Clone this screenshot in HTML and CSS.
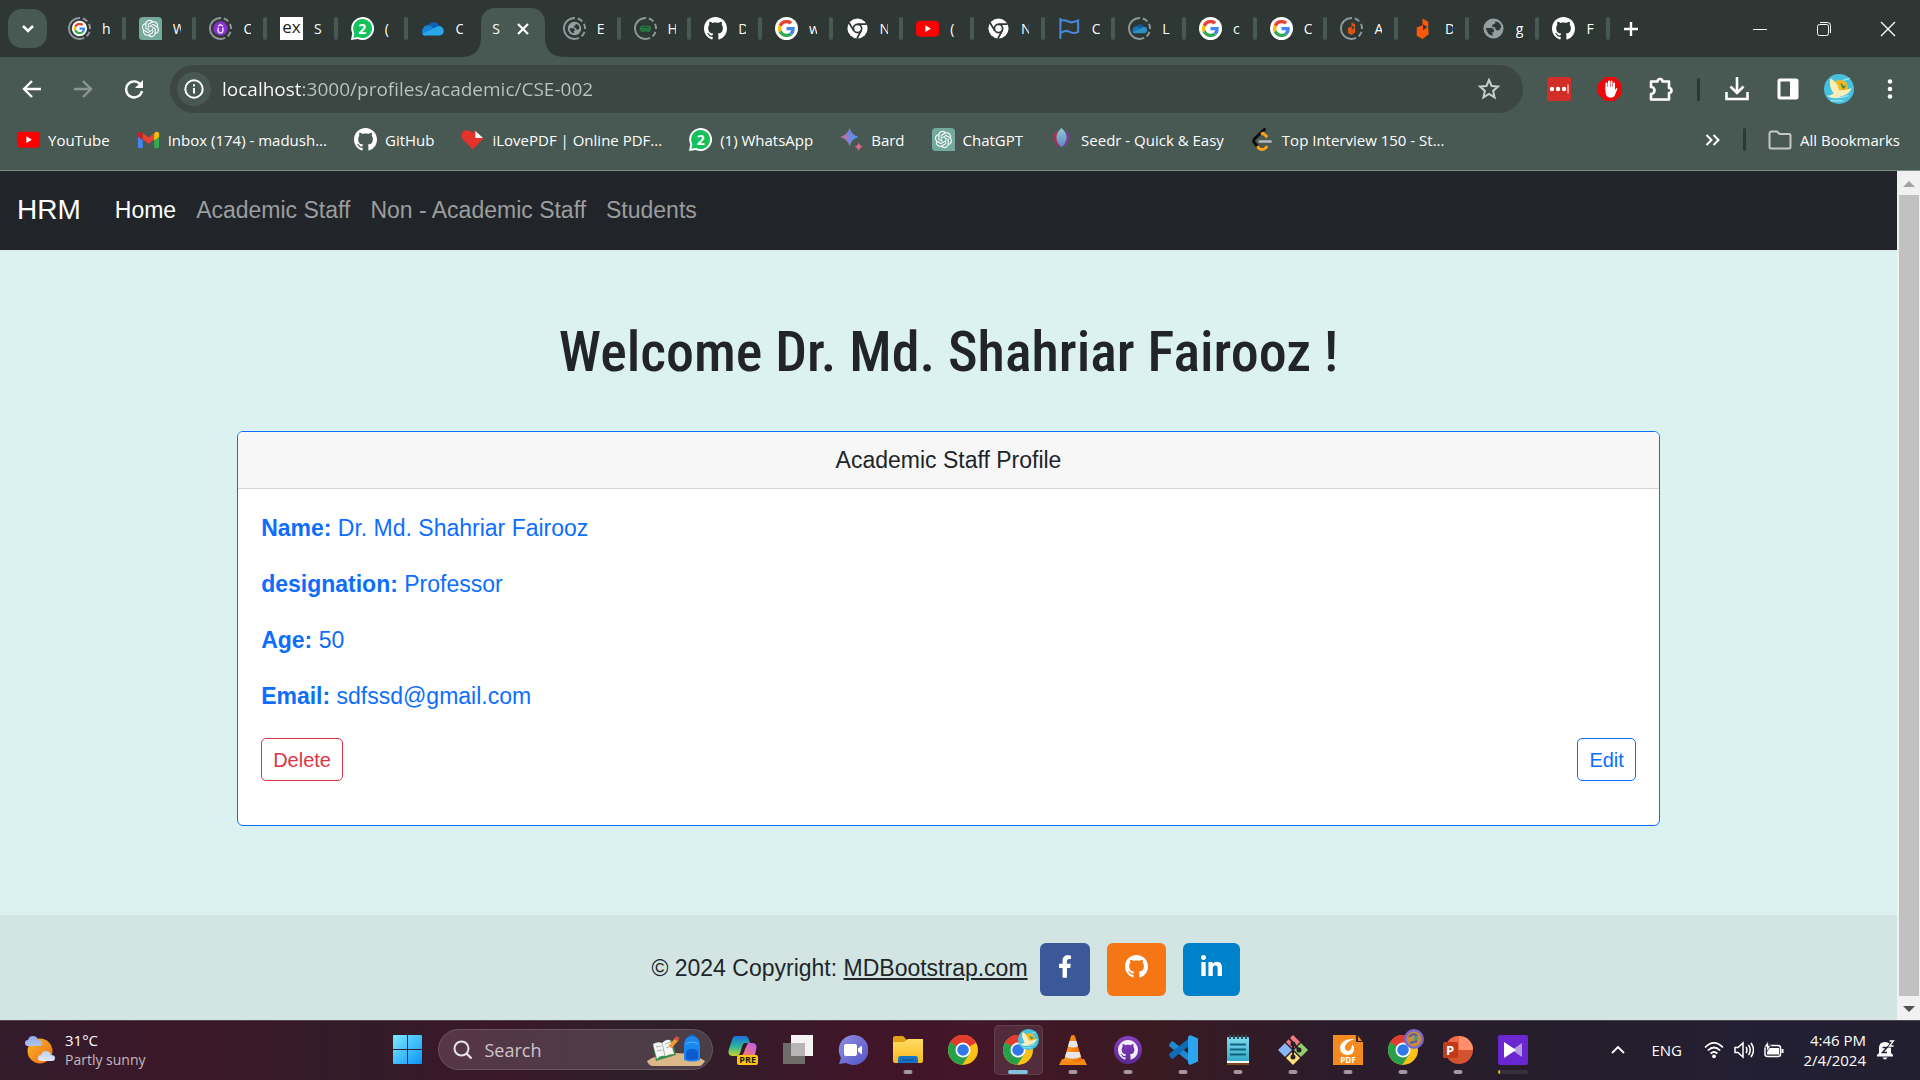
FILE: index.html
```html
<!DOCTYPE html>
<html lang="en">
<head>
<meta charset="utf-8">
<meta name="viewport" content="width=device-width, initial-scale=1">
<title>Staff Profile</title>
<link rel="stylesheet" href="styles.css">
</head>
<body>
<svg class="defs" aria-hidden="true">
  <defs>
    <linearGradient id="win-g" x1="0" y1="0" x2="1" y2="1"><stop offset="0" stop-color="#7deaff"/><stop offset="1" stop-color="#0a94f8"/></linearGradient>
    <linearGradient id="sun-g" x1="0" y1="0" x2="1" y2="1"><stop offset="0" stop-color="#f9b82a"/><stop offset="1" stop-color="#ee6a12"/></linearGradient>
    <linearGradient id="cloud-g" x1="0" y1="0" x2="0" y2="1"><stop offset="0" stop-color="#8fabe8"/><stop offset="1" stop-color="#dfe9fb"/></linearGradient>
    <linearGradient id="bard-g" x1="0" y1="0" x2="1" y2="0"><stop offset="0" stop-color="#e0667c"/><stop offset=".5" stop-color="#7b82e0"/><stop offset="1" stop-color="#3fa0e8"/></linearGradient>
    <linearGradient id="seedr-g" x1="0" y1="0" x2="0" y2="1"><stop offset="0" stop-color="#8fd0cf"/><stop offset="1" stop-color="#5b86c4"/></linearGradient>
    <linearGradient id="folder-g" x1="0" y1="0" x2="0" y2="1"><stop offset="0" stop-color="#ffdc63"/><stop offset="1" stop-color="#f7b81c"/></linearGradient>
    <linearGradient id="meet-g" x1="0" y1="0" x2="1" y2="1"><stop offset="0" stop-color="#8f8fe0"/><stop offset="1" stop-color="#5353c8"/></linearGradient>
    <linearGradient id="cop-a" x1="0" y1="0" x2="0" y2="1"><stop offset="0" stop-color="#1f6fe0"/><stop offset=".5" stop-color="#27b2a0"/><stop offset="1" stop-color="#c7d42b"/></linearGradient>
    <linearGradient id="cop-b" x1="1" y1="0" x2="0" y2="1"><stop offset="0" stop-color="#b45cf0"/><stop offset="1" stop-color="#ff7a6b"/></linearGradient>
    <linearGradient id="purple-g" x1="0" y1="0" x2="0" y2="1"><stop offset="0" stop-color="#8a3fc0"/><stop offset="1" stop-color="#5b2a92"/></linearGradient>
    <linearGradient id="note-g" x1="0" y1="0" x2="0" y2="1"><stop offset="0" stop-color="#7fdcec"/><stop offset="1" stop-color="#35a9c9"/></linearGradient>
    <linearGradient id="cone-g" x1="0" y1="0" x2="1" y2="0"><stop offset="0" stop-color="#ffa031"/><stop offset="1" stop-color="#e86b00"/></linearGradient>
  </defs>
  <symbol id="github" viewBox="0 0 16 16"><path fill="currentColor" d="M8 0C3.58 0 0 3.58 0 8c0 3.54 2.29 6.53 5.47 7.59.4.07.55-.17.55-.38 0-.19-.01-.82-.01-1.49-2.01.37-2.53-.49-2.69-.94-.09-.23-.48-.94-.82-1.13-.28-.15-.68-.52-.01-.53.63-.01 1.08.58 1.23.82.72 1.21 1.87.87 2.33.66.07-.52.28-.87.51-1.07-1.78-.2-3.64-.89-3.64-3.95 0-.87.31-1.59.82-2.15-.08-.2-.36-1.02.08-2.12 0 0 .67-.21 2.2.82.64-.18 1.32-.27 2-.27.68 0 1.36.09 2 .27 1.53-1.04 2.2-.82 2.2-.82.44 1.1.16 1.92.08 2.12.51.56.82 1.27.82 2.15 0 3.07-1.87 3.75-3.65 3.95.29.25.54.73.54 1.48 0 1.07-.01 1.93-.01 2.2 0 .21.15.46.55.38A8.012 8.012 0 0 0 16 8c0-4.42-3.58-8-8-8z"/></symbol>
  <symbol id="g-mark" viewBox="0 0 48 48"><path fill="#ea4335" d="M24 9.5c3.54 0 6.71 1.22 9.21 3.6l6.85-6.85C35.9 2.38 30.47 0 24 0 14.62 0 6.51 5.38 2.56 13.22l7.98 6.19C12.43 13.72 17.74 9.5 24 9.5z"/><path fill="#4285f4" d="M46.98 24.55c0-1.57-.15-3.09-.38-4.55H24v9.02h12.94c-.58 2.96-2.26 5.48-4.78 7.18l7.73 6c4.51-4.18 7.09-10.36 7.09-17.65z"/><path fill="#fbbc05" d="M10.53 28.59c-.48-1.45-.76-2.99-.76-4.59s.27-3.14.76-4.59l-7.98-6.19C.92 16.46 0 20.12 0 24c0 3.88.92 7.54 2.56 10.78l7.97-6.19z"/><path fill="#34a853" d="M24 48c6.48 0 11.93-2.13 15.89-5.81l-7.73-6c-2.15 1.45-4.92 2.3-8.16 2.3-6.26 0-11.57-4.22-13.47-9.91l-7.98 6.19C6.51 42.62 14.62 48 24 48z"/></symbol>
  <symbol id="google" viewBox="0 0 24 24"><circle cx="12" cy="12" r="12" fill="#fff"/><use href="#g-mark" x="3" y="3" width="18" height="18"/></symbol>
  <symbol id="ring" viewBox="0 0 24 24"><circle cx="12" cy="12" r="11" fill="none" stroke="#8f989a" stroke-width="2" stroke-dasharray="34.5 3 5.6 3 5.6 3 5.6 3 6 0"  transform="rotate(92 12 12)"/></symbol>
  <symbol id="google-idle" viewBox="0 0 24 24"><use href="#ring"/><circle cx="12" cy="12" r="8" fill="#fff"/><use href="#g-mark" x="6" y="6" width="12" height="12"/></symbol>
  <symbol id="gpt" viewBox="0 0 24 24"><path fill="#74aa9c" d="M4 0h16a4 4 0 0 1 4 4v20H4a4 4 0 0 1-4-4V4a4 4 0 0 1 4-4z"/><g transform="translate(3 3) scale(.75)"><path fill="#fff" d="M22.2819 9.8211a5.9847 5.9847 0 0 0-.5157-4.9108 6.0462 6.0462 0 0 0-6.5098-2.9A6.0651 6.0651 0 0 0 4.9807 4.1818a5.9847 5.9847 0 0 0-3.9977 2.9 6.0462 6.0462 0 0 0 .7427 7.0966 5.98 5.98 0 0 0 .511 4.9107 6.051 6.051 0 0 0 6.5146 2.9001A5.9847 5.9847 0 0 0 13.2599 24a6.0557 6.0557 0 0 0 5.7718-4.2058 5.9894 5.9894 0 0 0 3.9977-2.9001 6.0557 6.0557 0 0 0-.7475-7.0729zm-9.022 12.6081a4.4755 4.4755 0 0 1-2.8764-1.0408l.1419-.0804 4.7783-2.7582a.7948.7948 0 0 0 .3927-.6813v-6.7369l2.02 1.1686a.071.071 0 0 1 .038.052v5.5826a4.504 4.504 0 0 1-4.4945 4.4944zm-9.6607-4.1254a4.4708 4.4708 0 0 1-.5346-3.0137l.142.0852 4.783 2.7582a.7712.7712 0 0 0 .7806 0l5.8428-3.3685v2.3324a.0804.0804 0 0 1-.0332.0615L9.74 19.9502a4.4992 4.4992 0 0 1-6.1408-1.6464zM2.3408 7.8956a4.485 4.485 0 0 1 2.3655-1.9728V11.6a.7664.7664 0 0 0 .3879.6765l5.8144 3.3543-2.0201 1.1685a.0757.0757 0 0 1-.071 0l-4.8303-2.7865A4.504 4.504 0 0 1 2.3408 7.872zm16.5963 3.8558L13.1038 8.364 15.1192 7.2a.0757.0757 0 0 1 .071 0l4.8303 2.7913a4.4944 4.4944 0 0 1-.6765 8.1042v-5.6772a.79.79 0 0 0-.407-.667zm2.0107-3.0231l-.142-.0852-4.7735-2.7818a.7759.7759 0 0 0-.7854 0L9.409 9.2297V6.8974a.0662.0662 0 0 1 .0284-.0615l4.8303-2.7866a4.4992 4.4992 0 0 1 6.6802 4.66zM8.3065 12.863l-2.02-1.1638a.0804.0804 0 0 1-.038-.0567V6.0742a4.4992 4.4992 0 0 1 7.3757-3.4537l-.142.0805L8.704 5.459a.7948.7948 0 0 0-.3927.6813zm1.0976-2.3654l2.602-1.4998 2.6069 1.4998v2.9994l-2.5974 1.4997-2.6067-1.4997Z"/></g></symbol>
  <symbol id="udemy" viewBox="0 0 24 24"><use href="#ring"/><circle cx="12" cy="12" r="7.5" fill="#8a2fd0"/><path d="M9.5 11v3a2.5 2.5 0 0 0 5 0v-3M9.5 9.500 12 8l2.500 1.500" fill="none" stroke="#e9d9ff" stroke-width="1.600"/></symbol>
  <symbol id="whatsapp" viewBox="0 0 24 24"><path fill="#fff" d="M12 0a12 12 0 1 1-5 22.900L0 24l1.300-7A12 12 0 0 1 12 0z"/><path fill="#13c25a" d="M12 2a10 10 0 1 1-4.600 18.900L2.500 21.700l1-4.800A10 10 0 0 1 12 2z"/></symbol>
  <symbol id="cloud" viewBox="0 0 24 24"><path fill="#0a62b8" d="M7 10a6.500 6.500 0 0 1 12-1l-9 6z"/><path fill="#1484d7" d="M2 12a5.500 5.500 0 0 1 8-2.500l8 5.500-14 4.500A5 5 0 0 1 2 12z"/><path fill="#28a8ea" d="M18 9.500a5 5 0 0 1 1.500 9.900H5a5 5 0 0 1-4-2l9.500-4z"/></symbol>
  <symbol id="cloud-idle" viewBox="0 0 24 24"><use href="#ring"/><use href="#cloud" x="4" y="4" width="16" height="16" opacity=".8"/></symbol>
  <symbol id="globe" viewBox="0 0 24 24"><circle cx="12" cy="12" r="10.500" fill="#969ea0"/><path fill="#2e3734" d="M4 11.500h6q2.500.5 2.500 2.500v2h-2l1 3.500q-6-.5-7.500-8zM20 10q-1 4.500-4 4-2.500-.5-2-3l-3-.5Q10 8 12 7.500q2 0 2-3 5 1 6 5.500z"/></symbol>
  <symbol id="globe-idle" viewBox="0 0 24 24"><use href="#ring"/><use href="#globe" x="4" y="4" width="16" height="16"/></symbol>
  <symbol id="gfg-idle" viewBox="0 0 24 24"><use href="#ring"/><path fill="none" stroke="#247a3f" stroke-width="1.800" d="M11.500 10.500a2.600 2.600 0 1 0 0 3.500v-1.500H6M12.500 10.500a2.600 2.600 0 1 1 0 3.500v-1.500H18"/></symbol>
  <symbol id="chrome-white" viewBox="0 0 24 24"><circle cx="12" cy="12" r="10.500" fill="#fff"/><circle cx="12" cy="12" r="4.300" fill="#fff" stroke="#2e3734" stroke-width="1.800"/><path d="M12 7.500h9.500M8.100 14.200 3.300 6.300M15.900 14.200l-4.500 8.200" stroke="#2e3734" stroke-width="1.800"/></symbol>
  <symbol id="youtube" viewBox="0 0 24 24"><rect x="0" y="4" width="24" height="16.500" rx="4" fill="#f00"/><path fill="#fff" d="M9.800 8.700v7l5.800-3.500z"/></symbol>
  <symbol id="flag" viewBox="0 0 24 24"><path fill="none" stroke="#4a86d8" stroke-width="2.200" d="M2.500 1v22M3 4c5-2.500 8 2.500 12 1.500 2.500-.5 4-1 6-2v12c-6 3.500-9-1-12-1-2.500 0-4 1-6 2"/></symbol>
  <symbol id="flame" viewBox="0 0 24 24"><path fill="#fb5a0c" d="M12 1.500l6 3.500v6.500l.500 6.500-6.500 5-6-3.500V11l6-2.500z"/><path fill="#2e3734" d="M12.500 7.500l4.500 3-4.500 3.500z"/></symbol>
  <symbol id="flame-idle" viewBox="0 0 24 24"><use href="#ring"/><use href="#flame" x="4.500" y="4.500" width="15" height="15" opacity=".85"/></symbol>
  <symbol id="gmail" viewBox="0 0 24 24"><path fill="#4285f4" d="M1 7v12.500A1.500 1.500 0 0 0 2.500 21H6V10z"/><path fill="#34a853" d="M23 7v12.500a1.500 1.500 0 0 1-1.500 1.500H18V10z"/><path fill="#ea4335" d="M6 5.500v6.500l6 4.500 6-4.500V5.500L12 10z"/><path fill="#c5221f" d="M1 6v3l5 4V5.500C3.500 3 1 4 1 6z"/><path fill="#fbbc04" d="M23 6v3l-5 4V5.500C20.500 3 23 4 23 6z"/></symbol>
  <symbol id="lovepdf" viewBox="0 0 24 24"><path fill="#e5322d" d="M12 22.500 2 12C-2 7 2 1.500 7 2.500c2 .300 3.500 1.300 5 2.500l3-2.500 8 8.500-1 1.500z"/><path fill="#fff" d="M15 3v7.500h8z"/></symbol>
  <symbol id="bard" viewBox="0 0 24 24"><path fill="url(#bard-g)" d="M10 0c1.500 5 4.500 8 9.500 9.500C14.500 11 11.500 14 10 19 8.500 14 5 11 0 9.500 5 8 8.500 5 10 0z"/><path fill="#dd6b86" d="M19.500 15c.700 2.600 1.900 3.800 4.500 4.500-2.600.700-3.800 1.900-4.500 4.500-.700-2.600-1.900-3.800-4.500-4.500 2.600-.700 3.800-1.900 4.500-4.500z"/></symbol>
  <symbol id="seedr" viewBox="0 0 24 24"><path fill="#a8305c" d="M8 2C2 5 2 16 10 20z"/><path fill="#7a3f9c" d="M16 2c6 3 6 14-3 18z"/><path fill="url(#seedr-g)" d="M12 0c7 6 7 14 0 20-7-6-7-14 0-20z"/></symbol>
  <symbol id="leet" viewBox="0 0 24 24"><path d="M14 1.500 4 11q-2.500 2.500 0 5l2.500 3" fill="none" stroke="#0b0b0b" stroke-width="3" stroke-linecap="round"/><path d="M10.500 6.500l2-1L17 9.500M6.500 19l2 2.500q3 2 6 0l2.500-2.500" fill="none" stroke="#ffa116" stroke-width="3"/><path d="M9 14h11.500" stroke="#b8b8b8" stroke-width="2.600" stroke-linecap="round"/></symbol>
  <symbol id="chrome" viewBox="0 0 30 30"><circle cx="15" cy="15" r="15" fill="#fbc116"/><path fill="#e33b2e" d="M15 15 2 7.500a15 15 0 0 1 26 0z"/><path fill="#e33b2e" d="M15 7.500h13L15 15z"/><path fill="#27a04c" d="M2 7.500a15 15 0 0 0 12.200 22.400L21.500 18.800 15 15z"/><path fill="#27a04c" d="M2 7.500 9 19l6-4z"/><circle cx="15" cy="15" r="7.500" fill="#fff"/><circle cx="15" cy="15" r="5.800" fill="#3078ea"/></symbol>
  <symbol id="avatar" viewBox="0 0 28 28"><circle cx="14" cy="14" r="14" fill="#45c1dd"/><path d="M3 20q8 4 20 0M18 6l6-2M6 25h12" stroke="#8fe0ef" stroke-width="1.500" fill="none"/><circle cx="15" cy="13" r="7.500" fill="#f5b822"/><path fill="#fbeeb8" d="M6 4q6 3 8 11 6 1 12-2-3 6-8 7-7 4-14 1l5-3Q4 11 6 4z"/><path d="M16 9l2 4 2-2" stroke="#358a49" stroke-width="1.500" fill="none"/></symbol>
</svg>

<header class="browser">
  <div class="tabstrip">
    <button class="tab-search" aria-label="Search tabs"><svg width="14" height="14" viewBox="0 0 14 14"><path d="M2 4l5 5 5-5" fill="none" stroke="#fff" stroke-width="2.500"/></svg></button>
    <div class="tabs">
      <div class="tab"><svg class="fav"><use href="#google-idle"/></svg><span>h</span></div>
      <div class="tab"><svg class="fav"><use href="#gpt"/></svg><span>W</span></div>
      <div class="tab"><svg class="fav"><use href="#udemy"/></svg><span>C</span></div>
      <div class="tab"><b class="fav fav-ex">ex</b><span>S</span></div>
      <div class="tab"><b class="fav fav-wa"><svg class="fav"><use href="#whatsapp"/></svg><i>2</i></b><span>(</span></div>
      <div class="tab tab-last"><svg class="fav"><use href="#cloud"/></svg><span>C</span></div>
      <div class="tab tab-active"><span>S</span><button aria-label="Close tab"><svg width="14" height="14" viewBox="0 0 14 14"><path d="M2 2l10 10M12 2 2 12" stroke="#fff" stroke-width="2.200"/></svg></button></div>
      <div class="tab"><svg class="fav"><use href="#globe-idle"/></svg><span>E</span></div>
      <div class="tab"><svg class="fav"><use href="#gfg-idle"/></svg><span>H</span></div>
      <div class="tab"><svg class="fav"><use href="#github"/></svg><span>D</span></div>
      <div class="tab"><svg class="fav"><use href="#google"/></svg><span>w</span></div>
      <div class="tab"><svg class="fav"><use href="#chrome-white"/></svg><span>N</span></div>
      <div class="tab"><svg class="fav"><use href="#youtube"/></svg><span>(</span></div>
      <div class="tab"><svg class="fav"><use href="#chrome-white"/></svg><span>N</span></div>
      <div class="tab"><svg class="fav"><use href="#flag"/></svg><span>C</span></div>
      <div class="tab"><svg class="fav"><use href="#cloud-idle"/></svg><span>L</span></div>
      <div class="tab"><svg class="fav"><use href="#google"/></svg><span>c</span></div>
      <div class="tab"><svg class="fav"><use href="#google"/></svg><span>C</span></div>
      <div class="tab"><svg class="fav"><use href="#flame-idle"/></svg><span>A</span></div>
      <div class="tab"><svg class="fav"><use href="#flame"/></svg><span>D</span></div>
      <div class="tab"><svg class="fav"><use href="#globe"/></svg><span>g</span></div>
      <div class="tab"><svg class="fav"><use href="#github"/></svg><span>F</span></div>
    </div>
    <button class="new-tab" aria-label="New tab"><svg width="16" height="16" viewBox="0 0 16 16"><path d="M8 1v14M1 8h14" stroke="#fff" stroke-width="2.400"/></svg></button>
    <div class="window-controls">
      <button aria-label="Minimize"><svg width="14" height="14" viewBox="0 0 14 14"><path d="M0 7.500h14" stroke="#fff"/></svg></button>
      <button aria-label="Restore"><svg width="16" height="16" viewBox="0 0 16 16" fill="none" stroke="#fff"><rect x="1.500" y="3.500" width="11" height="11" rx="2"/><path d="M4 1.500h7.500a3 3 0 0 1 3 3V12"/></svg></button>
      <button aria-label="Close"><svg width="16" height="16" viewBox="0 0 16 16"><path d="M1 1l14 14M15 1 1 15" stroke="#fff" stroke-width="1.300"/></svg></button>
    </div>
  </div>

  <div class="toolbar">
    <div class="nav-buttons">
      <button aria-label="Back"><svg width="20" height="20" viewBox="0 0 20 20"><path d="M19 10H3M10 2l-8 8 8 8" fill="none" stroke="#fff" stroke-width="2.400"/></svg></button>
      <button aria-label="Forward"><svg width="20" height="20" viewBox="0 0 20 20"><path d="M1 10h16M10 2l8 8-8 8" fill="none" stroke="#8b9691" stroke-width="2.400"/></svg></button>
      <button aria-label="Reload"><svg width="20" height="20" viewBox="0 0 20 20"><path d="M16.500 5.500A8 8 0 1 0 18 12" fill="none" stroke="#fff" stroke-width="2.400"/><path fill="#fff" d="M19 1v8h-8z"/></svg></button>
    </div>
    <div class="omnibox">
      <button class="site-info" aria-label="Site information"><svg width="20" height="20" viewBox="0 0 20 20"><circle cx="10" cy="10" r="8.700" fill="none" stroke="#fff" stroke-width="2"/><path d="M10 9v5.500M10 5.300v2.200" stroke="#fff" stroke-width="2"/></svg></button>
      <input class="address" type="text" aria-label="Address" value="localhost:3000/profiles/academic/CSE-002">
      <button class="star" aria-label="Bookmark this page"><svg width="24" height="24" viewBox="0 0 24 24"><path d="M12 3l2.600 6 6.400.600-4.900 4.300 1.500 6.400L12 16.900l-5.600 3.400 1.500-6.400L3 9.600l6.400-.600z" fill="none" stroke="#c9cecb" stroke-width="2"/></svg></button>
    </div>
    <div class="extensions">
      <button aria-label="Password manager"><svg width="24" height="24" viewBox="0 0 24 24"><rect width="24" height="24" rx="2" fill="#d32d27"/><g fill="#fff"><circle cx="5" cy="12" r="2.200"/><circle cx="11" cy="12" r="2.200"/><circle cx="17" cy="12" r="2.200"/><path d="M20.500 7.500h1v9h-1z"/></g></svg></button>
      <button aria-label="Ad blocker"><svg width="24" height="24" viewBox="0 0 24 24"><path fill="#ea0a0a" d="M7 0h10l7 7v10l-7 7H7l-7-7V7z"/><path d="M8.500 13V6.500M11 12V4.500M13.500 12V4.500M16 13V6.500" stroke="#fff" stroke-width="2" stroke-linecap="round"/><path fill="#fff" d="M7.500 10H17v3l1.500-2q1.500 0 .5 2l-2.500 6q-1 1.500-3 1.500h-2q-4-1-4-6z"/></svg></button>
      <button aria-label="Extensions"><svg width="26" height="26" viewBox="0 0 26 26"><path d="M3 5.500h6.500a2.500 2.500 0 0 1 5 0H21v6.500a2.500 2.500 0 0 1 0 5V23.500H3V18a3.500 3.500 0 0 0 0-7z" fill="none" stroke="#fff" stroke-width="2.600" stroke-linejoin="round"/></svg></button>
      <span class="divider"></span>
      <button aria-label="Downloads"><svg width="24" height="24" viewBox="0 0 24 24"><path d="M12 0v15M5.500 9.500 12 16l6.500-6.500M1.500 15v7h21v-7" fill="none" stroke="#fff" stroke-width="2.600"/></svg></button>
      <button aria-label="Side panel"><svg width="22" height="22" viewBox="0 0 22 22"><rect x="2" y="2" width="18" height="18" rx="1" fill="none" stroke="#fff" stroke-width="3"/><path fill="#fff" d="M13 1h8v20h-8z"/></svg></button>
      <button aria-label="Profile"><svg width="30" height="30"><use href="#avatar"/></svg></button>
      <button aria-label="Menu"><svg width="6" height="20" viewBox="0 0 6 20" fill="#fff"><circle cx="3" cy="2.500" r="2.300"/><circle cx="3" cy="10" r="2.300"/><circle cx="3" cy="17.500" r="2.300"/></svg></button>
    </div>
  </div>

  <nav class="bookmarks" aria-label="Bookmarks">
    <a href="#"><svg class="fav"><use href="#youtube"/></svg>YouTube</a>
    <a href="#"><svg class="fav"><use href="#gmail"/></svg>Inbox (174) - madush...</a>
    <a href="#"><svg class="fav"><use href="#github"/></svg>GitHub</a>
    <a href="#"><svg class="fav"><use href="#lovepdf"/></svg>iLovePDF | Online PDF...</a>
    <a href="#"><b class="fav fav-wa"><svg class="fav"><use href="#whatsapp"/></svg><i>2</i></b>(1) WhatsApp</a>
    <a href="#"><svg class="fav"><use href="#bard"/></svg>Bard</a>
    <a href="#"><svg class="fav"><use href="#gpt"/></svg>ChatGPT</a>
    <a href="#"><svg class="fav"><use href="#seedr"/></svg>Seedr - Quick &amp; Easy</a>
    <a href="#"><svg class="fav"><use href="#leet"/></svg>Top Interview 150 - St...</a>
    <button class="more" aria-label="More bookmarks"><svg width="16" height="14" viewBox="0 0 16 14"><path d="M1.500 2l5 5-5 5M8.500 2l5 5-5 5" fill="none" stroke="#fff" stroke-width="2"/></svg></button>
    <span class="divider"></span>
    <a href="#"><svg width="24" height="20" viewBox="0 0 24 20"><path d="M1.500 3.500a2 2 0 0 1 2-2H9L11.500 4H21a1.500 1.500 0 0 1 1.500 1.500V17a1.500 1.500 0 0 1-1.500 1.500H3A1.500 1.500 0 0 1 1.500 17z" fill="none" stroke="#c4c8c5" stroke-width="2"/></svg>All Bookmarks</a>
  </nav>
</header>

<div class="viewport">
  <div class="site">
    <nav class="navbar" aria-label="Main">
      <a class="brand" href="#">HRM</a>
      <a class="current" href="#">Home</a>
      <a href="#">Academic Staff</a>
      <a href="#">Non - Academic Staff</a>
      <a href="#">Students</a>
    </nav>
    <main class="content">
      <h1>Welcome Dr. Md. Shahriar Fairooz !</h1>
      <section class="card">
        <h2>Academic Staff Profile</h2>
        <div class="card-body">
          <p><b>Name:</b> Dr. Md. Shahriar Fairooz</p>
          <p><b>designation:</b> Professor</p>
          <p><b>Age:</b> 50</p>
          <p><b>Email:</b> sdfssd@gmail.com</p>
          <div class="actions">
            <button class="btn btn-danger">Delete</button>
            <button class="btn btn-primary">Edit</button>
          </div>
        </div>
      </section>
    </main>
    <footer class="footer">
      <p>© 2024 Copyright: <a href="#">MDBootstrap.com</a></p>
      <a class="social facebook" href="#" aria-label="Facebook"><svg width="14" height="23" viewBox="0 0 320 512"><path fill="#fff" d="M279.140 288l14.220-92.660h-88.910v-60.130c0-25.350 12.420-50.060 52.240-50.060h40.420V6.260S260.430 0 225.360 0c-73.220 0-121.080 44.380-121.080 124.720v70.620H22.890V288h81.390v224h100.170V288z"/></svg></a>
      <a class="social git" href="#" aria-label="GitHub"><svg width="23" height="23"><use href="#github"/></svg></a>
      <a class="social linkedin" href="#" aria-label="LinkedIn"><svg width="21" height="24" viewBox="0 0 448 512"><path fill="#fff" d="M100.280 448H7.400V148.900h92.880zM53.790 108.100C24.090 108.100 0 83.500 0 53.800a53.790 53.790 0 0 1 107.580 0c0 29.700-24.100 54.300-53.790 54.300zM447.900 448h-92.680V302.400c0-34.700-.700-79.200-48.290-79.200-48.290 0-55.690 37.700-55.690 76.700V448h-92.780V148.900h89.080v40.800h1.300c12.400-23.500 42.690-48.300 87.880-48.300 94 0 111.280 61.900 111.280 142.300V448z"/></svg></a>
    </footer>
  </div>
  <div class="scrollbar" aria-hidden="true">
    <svg width="12" height="24" viewBox="0 0 12 24"><path fill="#a3a3a3" d="M0 16l6-6 6 6z"/></svg>
    <span class="thumb"></span>
    <svg width="12" height="24" viewBox="0 0 12 24"><path fill="#505050" d="M0 10l6 6 6-6z"/></svg>
  </div>
</div>

<div class="taskbar">
  <button class="weather">
    <svg width="30" height="30" viewBox="0 0 30 30"><circle cx="15" cy="16" r="12.500" fill="url(#sun-g)"/><path fill="url(#cloud-g)" d="M3 11a3 3 0 0 1 0-6q1-4 5-4t5 4q4 0 4 3t-3 3zM16 26a3 3 0 0 1 0-6q1-4 5-4t5 4q4 0 4 3t-3 3z"/></svg>
    <span>31°C<small>Partly sunny</small></span>
  </button>

  <div class="dock">
    <button class="app" aria-label="Start"><svg width="29" height="29" viewBox="0 0 29 29" fill="url(#win-g)"><path d="M0 1a1 1 0 0 1 1-1h27a1 1 0 0 1 1 1v27a1 1 0 0 1-1 1H1a1 1 0 0 1-1-1z"/><path d="M14 0h1v29h-1zM0 14h29v1H0z" fill="#33203a"/></svg></button>
    <div class="search">
      <svg width="20" height="20" viewBox="0 0 20 20"><circle cx="8.500" cy="8.500" r="7" fill="none" stroke="#e9e2e6" stroke-width="2"/><path d="M13.500 13.500l5 5" stroke="#e9e2e6" stroke-width="2.400"/></svg>
      <input type="search" aria-label="Search" placeholder="Search">
      <svg width="58" height="32" viewBox="0 0 58 32"><path fill="#dcb788" d="M0 27q12-8 29-8t29 8q-3 5-6 5H6q-4 0-6-5z"/><path fill="#3c8f4f" d="M6 12l19-6 4 15-20 6z"/><path fill="#f6f6f2" d="M6 10q5-3 9-1 4-4 8-3l4 14q-5 0-8 2-6-1-9 3z"/><path d="M15 9l3 13M9 13l5-1M10 17l5-1M18 10l5-2M19 14l5-2" stroke="#a9b0b5" fill="none"/><path d="M30 5l-7 8" stroke="#f39a2d" stroke-width="4"/><path d="M31 3l-2 3" stroke="#e54b3c" stroke-width="4"/><path d="M42 4q3-6 6 0" stroke="#1664c8" stroke-width="2" fill="none"/><path fill="#1a86f0" d="M37 26V12q0-10 8-10t8 10v14q-8 3-16 0z"/><path fill="#0c5bd0" d="M39 25v-6q0-4 6-4t6 4v6q-6 2-12 0z"/><path d="M39 10q6-4 12 0" stroke="#5db5ff" fill="none"/></svg>
    </div>
    <button class="app" aria-label="Copilot"><span class="copilot"><svg width="30" height="30" viewBox="0 0 30 30"><path fill="url(#cop-a)" d="M8 1h9q3 0 4 4l1 3h-5q-2 0-3 4l-2 6q-1 3-4 3H4q-5-1-3-7L4 5q1-4 4-4z"/><path fill="url(#cop-b)" d="M20 8h5q5 1 3 7l-1 5H14q2-1 3-6z"/></svg><em>PRE</em></span></button>
    <button class="app" aria-label="Task view"><svg width="30" height="30" viewBox="0 0 30 30"><rect y="8" width="22" height="21" fill="#6f6c6c"/><rect x="8" width="22" height="21" fill="#f6f3f4"/><path fill="#b9b5b6" d="M8 8h14v13H8z"/></svg></button>
    <button class="app" aria-label="Chat"><svg width="30" height="30" viewBox="0 0 30 30"><path fill="url(#meet-g)" d="M15 0a15 15 0 1 1-7 28l-7 1 2-6A15 15 0 0 1 15 0z"/><path fill="#fff" d="M6 11a2 2 0 0 1 2-2h9a2 2 0 0 1 2 2v8a2 2 0 0 1-2 2H8a2 2 0 0 1-2-2zM20 13.500l4-3v9l-4-3z"/></svg></button>
    <button class="app running" aria-label="File Explorer"><svg width="30" height="30" viewBox="0 0 30 30"><path fill="#e0a214" d="M0 3q0-2 2-2h8l4 4v4H0z"/><path fill="url(#folder-g)" d="M0 7h11l4-3h15v22q0 2-2 2H2q-2 0-2-2z"/><path fill="#1673c4" d="M5 28v-4q0-3 3-3h14q3 0 3 3v4z"/><path d="M9 25h12" stroke="#0b4c8c"/></svg></button>
    <button class="app" aria-label="Chrome"><svg width="30" height="30"><use href="#chrome"/></svg></button>
    <button class="app running active" aria-label="Chrome, work profile"><svg width="42" height="42" viewBox="0 0 42 42"><use href="#chrome" x="6" y="6" width="30" height="30"/><use href="#avatar" x="21" y="0" width="21" height="21"/></svg></button>
    <button class="app running" aria-label="VLC"><svg width="28" height="30" viewBox="0 0 28 30"><path fill="#f58a12" d="M3 24h22l3 6H0z"/><path fill="url(#cone-g)" d="M12 1q2-2 4 0l7 24q-9 5-18 0z"/><path fill="#e6e6e8" d="M10.500 6h7l1.500 5.500q-5 2-10 0zM7.500 17h13l1.500 5q-8 3.500-16 0z"/></svg></button>
    <button class="app running" aria-label="GitHub Desktop"><svg width="30" height="30" viewBox="0 0 30 30"><circle cx="15" cy="15" r="14" fill="url(#purple-g)"/><use href="#github" x="5" y="5" width="20" height="20" color="#f3eefa"/></svg></button>
    <button class="app running" aria-label="Visual Studio Code"><svg width="30" height="30" viewBox="0 0 30 30"><path fill="#1f8ad2" d="M2 8l2.500-2L22 20v7.500L1 11z"/><path fill="#0f6db5" d="M2 22l2.500 2L22 10V2.500L1 19z"/><path fill="#2ba5f0" d="M22 0l8 3.500v23L22 30l-2-2V2z"/></svg></button>
    <button class="app running" aria-label="Notepad"><svg width="24" height="30" viewBox="0 0 24 30"><path fill="#7a4a1e" d="M1 26h22v4H1z"/><path fill="#fff" d="M1 25h22v3H1z"/><rect x="1" y="2" width="22" height="24" rx="1" fill="url(#note-g)"/><path d="M4 9.500h16M4 14.500h16M4 19.500h16" stroke="#12637d" stroke-width="2"/><path d="M4 0v4M8 0v4M12 0v4M16 0v4M20 0v4" stroke="#2e4f5c" stroke-width="2"/></svg></button>
    <button class="app running" aria-label="Git Bash"><svg width="30" height="30" viewBox="0 0 30 30"><path fill="#f47b7b" d="M15 0l7 7-7 7-7-7z"/><path fill="#8ab6f9" d="M7 8l7 7-7 7-7-7z"/><path fill="#8fd06a" d="M23 8l7 7-7 7-7-7z"/><path fill="#fbdf7c" d="M15 16l7 7-7 7-7-7z"/><path d="M11 3l4 5v14M15 8l6 7" stroke="#251d28" stroke-width="2" fill="none"/><circle cx="15" cy="9" r="2.500" fill="#251d28"/><circle cx="21" cy="15" r="2.500" fill="#251d28"/><circle cx="15" cy="22" r="2.500" fill="#251d28"/></svg></button>
    <button class="app running" aria-label="Foxit PDF"><span class="foxit"><svg width="30" height="30" viewBox="0 0 30 30"><path fill="#f58a1f" d="M0 0h23l7 7v23H0z"/><path fill="#33202a" d="M23 0h7v7h-7z"/><path fill="#f58a1f" d="M25 1l4 5h-4z"/><path fill="#fff" d="M22 4q-13-1-15 8 0 8 8 8 7-1 6-8l-2-3q0 7-4 7-4-1-3-5 2-5 10-7z"/></svg><em>PDF</em></span></button>
    <button class="app running" aria-label="Chrome, second profile"><svg width="42" height="42" viewBox="0 0 42 42"><use href="#chrome" x="6" y="6" width="30" height="30"/><circle cx="32" cy="10" r="10" fill="#7a68cf"/><circle cx="32" cy="10" r="7.500" fill="#c98b3f"/><path d="M27 8q4-5 8-1M28 14l7-2" stroke="#4a5f9c" stroke-width="2" fill="none"/><circle cx="34" cy="9" r="2" fill="#35a08c"/></svg></button>
    <button class="app running" aria-label="PowerPoint"><span class="ppt"><svg width="30" height="30" viewBox="0 0 30 30"><circle cx="16" cy="15" r="14" fill="#d35230"/><path fill="#ff8f6b" d="M16 1a14 14 0 0 1 14 14H16z"/><path fill="#ed6c47" d="M16 1v14H2A14 14 0 0 1 16 1z"/><rect y="7" width="15" height="16" rx="1.500" fill="#c13b1b"/></svg><em>P</em></span></button>
    <button class="app progress" aria-label="Visual Studio"><svg width="30" height="30" viewBox="0 0 30 30"><rect width="30" height="30" rx="2" fill="#6a26cf"/><path fill="#b79ae6" d="M24 8v14l-10-7z"/><path fill="#fff" d="M6 7v16l12-8z"/></svg></button>
  </div>

  <div class="tray">
    <button aria-label="Hidden icons"><svg width="14" height="10" viewBox="0 0 14 10"><path d="M1 8l6-6 6 6" fill="none" stroke="#fff" stroke-width="1.800"/></svg></button>
    <button class="lang">ENG</button>
    <button class="status" aria-label="Network, sound and battery">
      <svg width="20" height="18" viewBox="0 0 20 18"><path d="M1 6.500q9-9 18 0M3.800 9.500q6.200-6 12.400 0M6.600 12.500q3.400-3 6.800 0" fill="none" stroke="#fff" stroke-width="1.700"/><circle cx="10" cy="15.300" r="1.900" fill="#fff"/></svg>
      <svg width="20" height="18" viewBox="0 0 20 18"><path d="M1 6.500h3L9 2v14l-5-4.500H1zM12 6q2 3 0 6M14.500 4q3.500 5 0 10M17 2q5 7 0 14" fill="none" stroke="#fff" stroke-width="1.500"/></svg>
      <svg width="20" height="18" viewBox="0 0 20 18"><rect x="1" y="4.500" width="15.500" height="11" rx="2.500" fill="none" stroke="#fff" stroke-width="1.500"/><path fill="#fff" d="M3 7h12v6.500H3zM17.500 8h2v4h-2z"/><path fill="#fff" stroke="#231f33" stroke-width=".8" d="M4 0L0 6h2.500v5L7 4.500H4.500z"/></svg>
    </button>
    <button class="clock"><span>4:46 PM</span><span>2/4/2024</span></button>
    <button class="bell" aria-label="Notifications"><svg width="18" height="20" viewBox="0 0 18 20"><path fill="#fff" d="M2 13V8q0-6 6-6 6 0 6 6v5l2 2v1.500H0V15zM5.500 17.500h5q-1 2-2.500 2t-2.500-2z"/><path d="M5.500 7.500h4.500l-4.500 5H10" fill="none" stroke="#231f33" stroke-width="1.500"/><path d="M12.500 1h4l-4 5h4" fill="none" stroke="#231f33" stroke-width="3"/><path d="M12.500 1h4l-4 5h4" fill="none" stroke="#fff" stroke-width="1.300"/></svg></button>
  </div>
</div>
</body>
</html>
```

FILE: styles.css
```css
* {
  box-sizing: border-box;
}

body {
  margin: 0;
  min-height: 100vh;
  display: flex;
  flex-direction: column;
  font-family: "Open Sans", "Noto Sans", sans-serif;
  color: #fff;
}

button {
  display: flex;
  align-items: center;
  justify-content: center;
  padding: 0;
  border: 0;
  background: none;
  color: inherit;
  font: inherit;
}

a {
  color: inherit;
  text-decoration: none;
}

svg {
  display: block;
  flex-shrink: 0;
}

.defs {
  position: absolute;
  width: 0;
  height: 0;
}

/* Browser frame */

.browser {
  background: #485852;
  border-bottom: 1px solid #7b8d85;
}

.tabstrip {
  display: flex;
  align-items: center;
  height: 57px;
  padding-left: 8px;
  background: #2e3734;
}

.tab-search {
  width: 39px;
  height: 39px;
  margin-right: 8px;
  border-radius: 14px;
  background: #485852;
}

.tabs {
  display: flex;
  flex: 1;
  min-width: 0;
  align-self: stretch;
  padding-top: 8px;
}

.tab {
  position: relative;
  display: flex;
  flex: 1 1 70px;
  align-items: center;
  gap: 11px;
  min-width: 0;
  padding: 0 0 8px 13px;
  font-size: 14px;
}

.tab::after {
  content: "";
  position: absolute;
  right: 0;
  top: 9px;
  width: 4px;
  height: 23px;
  border-radius: 2px;
  background: #485852;
}

.tab-last::after {
  display: none;
}

.tab > span {
  width: 8px;
  overflow: hidden;
}

.fav {
  flex-shrink: 0;
  width: 23px;
  height: 23px;
}

.fav-ex {
  background: #fff;
  color: #222;
  font-size: 17px;
  font-weight: 400;
  line-height: 20px;
  text-align: center;
}

.fav-wa {
  display: grid;
  place-items: center;
  font-size: 14px;
  line-height: 23px;
}

.fav-wa > * {
  grid-area: 1 / 1;
  font-style: normal;
}

.tab-active {
  flex-basis: 63px;
  gap: 16px;
  margin: 0 5px 0 2px;
  padding-left: 11px;
  border-radius: 14px 14px 0 0;
  background: #485852;
}

.tab-active::before,
.tab-active::after {
  content: "";
  position: absolute;
  top: auto;
  bottom: 0;
  width: 16px;
  height: 16px;
  border-radius: 0;
}

.tab-active::before {
  right: 100%;
  background: radial-gradient(circle at 0 0, #2e3734 15px, #485852 16px);
}

.tab-active::after {
  right: auto;
  left: 100%;
  background: radial-gradient(circle at 100% 0, #2e3734 15px, #485852 16px);
}

.new-tab {
  width: 42px;
  height: 40px;
}

.window-controls {
  display: flex;
  margin-left: 76px;
}

.window-controls button {
  width: 64px;
  height: 56px;
}

.toolbar {
  display: flex;
  align-items: center;
  height: 64px;
  padding: 0 5px 0 6px;
}

.nav-buttons {
  display: flex;
  width: 164px;
}

.nav-buttons button,
.extensions button {
  width: 51px;
  height: 48px;
}

.omnibox {
  display: flex;
  flex: 1;
  align-items: center;
  height: 48px;
  padding: 0 22px 0 7px;
  border-radius: 24px;
  background: #3c4743;
}

.site-info {
  width: 34px;
  height: 34px;
  border-radius: 17px;
  background: #485852;
}

/* The host is brighter than the path */
.address {
  flex: 1;
  min-width: 0;
  margin-left: 11px;
  padding: 0;
  border: 0;
  outline: 0;
  background: linear-gradient(to right, #fff 79px, #bcc3c0 79px);
  background-clip: text;
  -webkit-background-clip: text;
  -webkit-text-fill-color: transparent;
  color: #bcc3c0;
  font-family: inherit;
  font-size: 19px;
  line-height: 28px;
}

.extensions {
  display: flex;
  align-items: center;
  margin-left: 10px;
}

.divider {
  width: 3px;
  height: 23px;
  margin: 0 11px;
  border-radius: 2px;
  background: #2e3734;
}

.bookmarks {
  display: flex;
  align-items: center;
  gap: 27px;
  height: 49px;
  padding: 0 20px 12px 17px;
  font-size: 15px;
  line-height: 22px;
  white-space: nowrap;
}

.bookmarks a {
  display: flex;
  align-items: center;
  gap: 8px;
}

.bookmarks .more {
  margin-left: auto;
}

.bookmarks .divider {
  margin: 0 -5px;
}

/* Web page */

.viewport {
  display: flex;
  flex: 1;
}

.site {
  display: flex;
  flex: 1;
  flex-direction: column;
  min-width: 0;
  background: #dcf2f0;
  color: #212529;
  font-family: "Liberation Sans", Arial, sans-serif;
  font-size: 23px;
  line-height: 34px;
}

.navbar {
  display: flex;
  align-items: center;
  gap: 20px;
  padding: 18px 17px 19px;
  background: #212529;
  color: #9b9d9f;
}

.navbar .brand {
  margin-right: 14px;
  color: #fff;
  font-size: 28px;
  line-height: 42px;
}

.navbar .current {
  color: #fff;
}

.content {
  flex: 1;
  padding: 69px 0 84px;
}

h1 {
  margin: 0 0 45px;
  font-family: "Roboto Condensed", "Liberation Sans Narrow", Roboto, sans-serif;
  font-size: 56px;
  font-weight: 500;
  line-height: 67px;
  text-align: center;
}

.card {
  width: 75%;
  margin: 0 auto;
  border: 1px solid #0d6efd;
  border-radius: 6px;
  background: #fff;
  overflow: hidden;
}

.card h2 {
  margin: 0;
  padding: 11px 22px;
  border-bottom: 1px solid #d8d8d8;
  background: #f7f7f7;
  font-size: inherit;
  font-weight: 400;
  text-align: center;
}

.card-body {
  padding: 22px 23px 44px;
  color: #0d6efd;
}

.card-body p {
  margin: 0 0 22px;
}

.actions {
  display: flex;
  justify-content: space-between;
  padding-top: 3px;
}

.btn {
  height: 43px;
  padding: 0 11px;
  border: 1px solid;
  border-radius: 5px;
  font-size: 20px;
}

.btn-danger {
  color: #dc3545;
}

.btn-primary {
  color: #0d6efd;
}

.footer {
  display: flex;
  align-items: center;
  justify-content: center;
  padding: 28px 6px 24px 0;
  background: #d2e5e3;
}

.footer p {
  margin: 0 12px 0 0;
  padding-bottom: 4px;
}

.footer p a {
  text-decoration: underline;
}

.social {
  display: flex;
  justify-content: center;
  height: 53px;
  margin-right: 17px;
  padding: 12px 18px;
  border-radius: 6px;
  color: #fff;
}

.facebook {
  background: #3b5998;
}

.git {
  background: #f57615;
}

.linkedin {
  margin-right: 0;
  background: #0082ca;
}

.scrollbar {
  display: flex;
  flex-direction: column;
  align-items: center;
  width: 23px;
  background: #f1f1f1;
}

.thumb {
  flex: 1;
  width: 20px;
  background: #c1c1c1;
}

/* Taskbar */

.taskbar {
  display: grid;
  grid-template-columns: 1fr auto 1fr;
  align-items: center;
  height: 60px;
  padding-bottom: 2px;
  border-top: 1px solid #51464c;
  background: linear-gradient(to right, #331b2c 0, #3c1828 10%, #331b28 18%, #3a1829 26%, #2e1f2b 34%, #401528 45%, #431628 51%, #3a1a22 60%, #2b1c2b 70%, #251d2b 82%, #231f33 92%, #221f30 100%);
  font-size: 15px;
  line-height: 20px;
}

.weather {
  justify-self: start;
  gap: 10px;
  padding-left: 25px;
  text-align: left;
}

.weather small {
  display: block;
  color: #c3b9c0;
  font-size: 14px;
}

.dock {
  display: flex;
  align-items: center;
  gap: 6px;
}

.app {
  position: relative;
  width: 49px;
  height: 50px;
  border-radius: 5px;
}

.app.active {
  background: #ffffff18;
  box-shadow: inset 0 0 0 1px #ffffff18;
}

.running::after,
.progress::after {
  content: "";
  position: absolute;
  left: 50%;
  bottom: 1px;
  width: 9px;
  height: 4px;
  border-radius: 2px;
  background: #a5959f;
  transform: translateX(-50%);
}

.active::after {
  width: 20px;
  background: #7cc3e0;
}

.progress::after {
  width: 30px;
  background: linear-gradient(to right, #e8c800 2px, #35303c 2px);
}

.search {
  display: flex;
  align-items: center;
  gap: 12px;
  width: 275px;
  height: 41px;
  padding: 0 7px 0 14px;
  border: 1px solid #6b5660;
  border-radius: 21px;
  background: linear-gradient(to right, #563548, #4a3f46);
}

.search input {
  flex: 1;
  min-width: 0;
  padding: 0;
  border: 0;
  outline: 0;
  background: none;
  color: #fff;
  font-family: inherit;
  font-size: 18px;
}

.search input::placeholder {
  color: #cfc4ca;
}

.copilot,
.foxit,
.ppt {
  display: grid;
}

.copilot > *,
.foxit > *,
.ppt > * {
  grid-area: 1 / 1;
  font-style: normal;
  font-weight: 700;
}

.copilot em {
  place-self: end;
  padding: 0 2px;
  border-radius: 2px;
  background: #fcc419;
  color: #201a10;
  font-size: 9px;
  line-height: 10px;
}

.foxit em {
  place-self: end center;
  font-size: 8px;
  line-height: 10px;
}

.ppt em {
  place-self: center start;
  padding-left: 3px;
  font-size: 13px;
}

.tray {
  display: flex;
  align-items: center;
  justify-self: end;
  padding-right: 25px;
}

.lang {
  margin-left: 26px;
}

.status {
  gap: 10px;
  margin-left: 22px;
}

.clock {
  flex-direction: column;
  align-items: flex-end;
  width: 71px;
  margin-left: 11px;
}

.bell {
  margin-left: 11px;
}
```
